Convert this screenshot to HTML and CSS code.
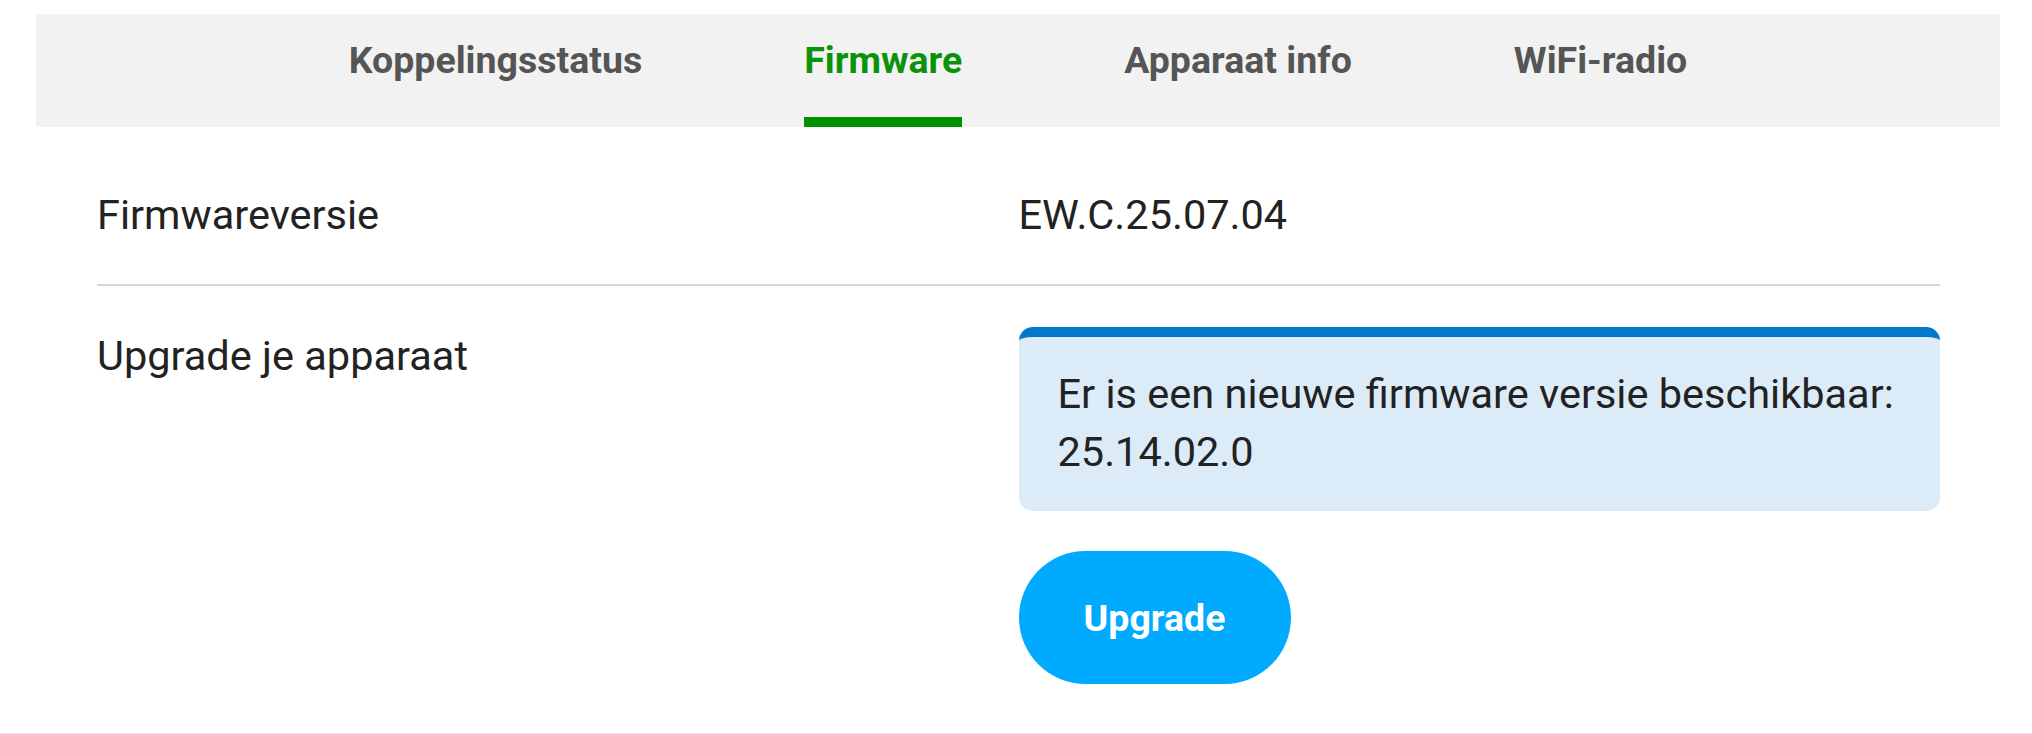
FILE: index.html
```html
<!DOCTYPE html>
<html lang="nl">

<head>
    <title>Firmware</title>
    <link rel="stylesheet" href="styles.css">
</head>

<body>
    <div class="pagina">
        <div class="tabbalk">
            <div class="tab">Koppelingsstatus</div>
            <div class="tab actief">Firmware</div>
            <div class="tab">Apparaat info</div>
            <div class="tab">WiFi-radio</div>
        </div>
        <div class="inhoud">
            <div class="rij">
                <div class="kolom">Firmwareversie</div>
                <div class="kolom">EW.C.25.07.04</div>
            </div>
            <div class="rij laatste">
                <div class="kolom">Upgrade je apparaat</div>
                <div class="kolom">
                    <div class="melding">Er is een nieuwe firmware versie beschikbaar: 25.14.02.0</div>
                    <button class="knop">Upgrade</button>
                </div>
            </div>
        </div>
    </div>
    <div class="voet"></div>
</body>

</html>
```

FILE: styles.css
```css
body {
    margin: 0;
    font-family: Roboto, "Liberation Sans", sans-serif;
    color: #222;
    background-color: #fff;
}

.pagina {
    margin: 14px 32px 0 36px;
}

.tabbalk {
    display: flex;
    justify-content: center;
    gap: 162px;
    background-color: #f2f2f2;
}

.tab {
    font-size: 37.5px;
    font-weight: bold;
    line-height: 42px;
    color: #555;
    padding: 25px 0 36px;
    border-bottom: 10px solid transparent;
}

.tab.actief {
    color: #0a930a;
    border-bottom-color: #009100;
}

.inhoud {
    padding: 19px 60px 9px 61px;
}

.rij {
    display: grid;
    grid-template-columns: 1fr 1fr;
    font-size: 41.5px;
    line-height: 58px;
    padding: 40px 0;
    border-bottom: 2px solid #d6d6d6;
}

.rij.laatste {
    padding: 41px 0 40px;
    border-bottom: none;
}

.melding {
    background-color: #dbebf7;
    border-top: 10px solid #0079cc;
    border-radius: 14px;
    padding: 28px 40px 30px 39px;
}

.knop {
    display: block;
    margin-top: 40px;
    font-family: Roboto, "Liberation Sans", sans-serif;
    font-size: 37.5px;
    font-weight: bold;
    color: #fff;
    background-color: #00aaff;
    border: none;
    border-radius: 70px;
    width: 272px;
    height: 133px;
}

.voet {
    border-top: 1px solid #e3e3e3;
}
```
